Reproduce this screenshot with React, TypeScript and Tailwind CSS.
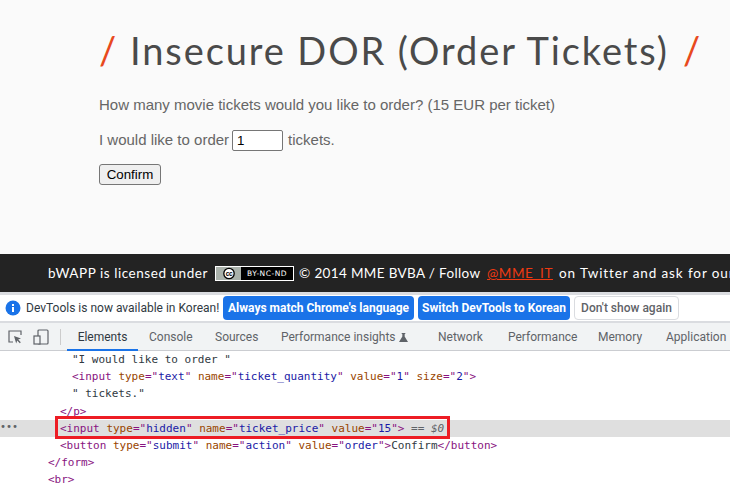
import React from 'react'

const ui = "font-['Roboto',sans-serif]"

const Attr = ({ name, value }: { name: string; value: string }) => (
  <>
    {' '}
    <span className="text-[#994500]">{name}</span>
    <span className="text-[#881280]">="</span>
    <span className="text-[#1a1aa6]">{value}</span>
    <span className="text-[#881280]">"</span>
  </>
)

const Tag = ({ children }: { children: React.ReactNode }) => <span className="text-[#881280]">{children}</span>

const Row = ({ pad, children }: { pad: string; children: React.ReactNode }) => (
  <div className={`h-[17.2px] leading-[17px] whitespace-pre ${pad}`}>{children}</div>
)

const App = () => {
  return (
    <div className="w-[730px] h-[494px] overflow-hidden bg-white">
      <main className="h-[254px] bg-[#fafafa] pl-[99px] pt-[24px] font-['Liberation_Sans',sans-serif] text-[#666666]">
        <h1 className="flex items-center h-[52px] text-[38px] font-['Lato',sans-serif] font-normal whitespace-nowrap">
          <span className="text-[#e8491d] w-[31px] shrink-0">/</span>
          <span className="text-[#4a4a4a] tracking-[1.9px] w-[553px] shrink-0">Insecure DOR (Order Tickets)</span>
          <span className="text-[#e8491d]">/</span>
        </h1>
        <p className="mt-[20px] text-[15px] leading-[18px]">How many movie tickets would you like to order? (15 EUR per ticket)</p>
        <p className="mt-[15px] flex items-center text-[15px] h-[22px]">
          I would like to order
          <input
            readOnly
            value="1"
            className="ml-[3px] mr-[5px] w-[51px] h-[21px] bg-white border border-[#767676] rounded-[2px] px-[4px] text-[13.3px] text-black outline-none"
          />
          tickets.
        </p>
        <button className="block mt-[13px] w-[62px] h-[21px] bg-[#efefef] border border-[#767676] rounded-[3px] text-[13.3px] leading-none text-black">
          Confirm
        </button>
      </main>

      <footer className="h-[38px] bg-[#232323] flex items-center pl-[48px] whitespace-nowrap overflow-hidden text-white text-[13.5px] font-['Lato',sans-serif] tracking-[0.55px]">
        <span className="w-[167px] shrink-0">bWAPP is licensed under</span>
        <span className="flex items-center shrink-0 w-[79px] h-[15px] bg-white p-px mr-[5px] tracking-normal">
          <span className="flex items-center justify-center w-[25px] h-full bg-[#aab2ab]">
            <svg viewBox="0 0 20 12" className="w-[20px] h-[13px]">
              <circle cx="10" cy="6" r="5.2" fill="#fff" stroke="#000" strokeWidth="1.3" />
              <text x="10" y="8.3" textAnchor="middle" fontSize="6.5" fontWeight="700" fontFamily="Liberation Sans" letterSpacing="-0.3">cc</text>
            </svg>
          </span>
          <span className="flex-1 h-full bg-black text-white text-center text-[7.5px] leading-[13px] tracking-[0.5px] font-['DejaVu_Sans',sans-serif]">BY-NC-ND</span>
        </span>
        <span className="w-[188px] shrink-0 tracking-[0.35px]">© 2014 MME BVBA / Follow</span>
        <span className="text-[#ee3a12] underline w-[72px] shrink-0">@MME_IT</span>
        <span className="tracking-[0.9px]">on Twitter and ask for our cheat sheets</span>
      </footer>

      <div className="h-[3px] bg-[#dadce0]" />

      <div className={`${ui} h-[26px] flex items-center pl-[5px] text-[12px] text-[#303942] whitespace-nowrap`}>
        <svg viewBox="0 0 16 16" className="w-[16px] h-[16px] mr-[5px] shrink-0">
          <circle cx="8" cy="8" r="7.5" fill="#1a73e8" />
          <rect x="7" y="7" width="2" height="5" fill="#fff" />
          <rect x="7" y="4" width="2" height="2" fill="#fff" />
        </svg>
        <span className="w-[197px] shrink-0">DevTools is now available in Korean!</span>
        <span className="flex items-center justify-center shrink-0 w-[191px] h-[24px] bg-[#1a73e8] text-white font-bold rounded-[4px] mr-[4px]">Always match Chrome's language</span>
        <span className="flex items-center justify-center shrink-0 w-[152px] h-[24px] bg-[#1a73e8] text-white font-bold rounded-[4px] mr-[4px]">Switch DevTools to Korean</span>
        <span className="flex items-center justify-center shrink-0 w-[105px] h-[24px] border border-[#dadce0] rounded-[4px] font-medium text-[#5f6368]">Don't show again</span>
      </div>

      <div className="h-[2px] bg-[#dadce0]" />

      <nav className={`${ui} h-[28px] bg-[#f1f3f4] border-b border-[#cbcdd1] flex items-center text-[12px] text-[#5f6368] whitespace-nowrap`}>
        <svg viewBox="0 0 16 16" className="w-[16px] h-[16px] ml-[7px] shrink-0" fill="none" stroke="#5f6368" strokeWidth="1.2">
          <path d="M14 6V2H2v11h4" />
          <path d="M7 7l7 2.6-2.8 1 2.6 2.6-1 1-2.6-2.6-1 2.8z" fill="#5f6368" stroke="none" />
        </svg>
        <svg viewBox="0 0 16 16" className="w-[16px] h-[16px] ml-[10px] shrink-0" fill="none" stroke="#5f6368" strokeWidth="1.2">
          <rect x="5" y="1" width="10" height="14" rx="1" />
          <rect x="1" y="7" width="6" height="8" fill="#f1f3f4" />
        </svg>
        <span className="w-px h-[16px] bg-[#ccc] ml-[11px] mr-[6px] shrink-0" />
        <span className="relative flex items-center justify-center shrink-0 w-[71px] h-full text-[#303942] pt-[1px]">
          Elements
          <span className="absolute left-0 right-0 bottom-[-1px] h-[2px] bg-[#1a73e8]" />
        </span>
        <span className="w-[66px] shrink-0 ml-[11px] pt-[1px]">Console</span>
        <span className="w-[66px] shrink-0 pt-[1px]">Sources</span>
        <span className="flex items-center gap-[3px] w-[157px] shrink-0 pt-[1px]">
          Performance insights
          <svg viewBox="0 0 10 10" className="w-[9px] h-[9px]">
            <path d="M3 0h4v1H6.3v3L10 10H0l3.7-6V1H3z" fill="#5f6368" />
          </svg>
        </span>
        <span className="w-[70px] shrink-0 pt-[1px]">Network</span>
        <span className="w-[90px] shrink-0 pt-[1px]">Performance</span>
        <span className="w-[68px] shrink-0 pt-[1px]">Memory</span>
        <span className="pt-[1px]">Application</span>
      </nav>

      <section className="font-['DejaVu_Sans_Mono',monospace] text-[11px]">
        <Row pad="pl-[72px]"><span className="text-[#303942]">"I would like to order "</span></Row>
        <Row pad="pl-[72px]">
          <Tag>&lt;input</Tag>
          <Attr name="type" value="text" />
          <Attr name="name" value="ticket_quantity" />
          <Attr name="value" value="1" />
          <Attr name="size" value="2" />
          <Tag>&gt;</Tag>
        </Row>
        <Row pad="pl-[72px]"><span className="text-[#303942]">" tickets."</span></Row>
        <Row pad="pl-[60px]"><Tag>&lt;/p&gt;</Tag></Row>
        <div className="relative h-[17.2px] bg-[#dfdfdf] leading-[17px] whitespace-pre pl-[60px]">
          <span className="absolute left-0 top-0 text-[#5f6368] text-[10px] leading-[14px]">•••</span>
          <Tag>&lt;input</Tag>
          <Attr name="type" value="hidden" />
          <Attr name="name" value="ticket_price" />
          <Attr name="value" value="15" />
          <Tag>&gt;</Tag>
          <span className="text-[#5f6368]"> == </span>
          <span className="text-[#5f6368] italic">$0</span>
          <span className="absolute left-[55px] top-[-4px] w-[395px] h-[23px] border-[3px] border-[#ed1c24]" />
        </div>
        <Row pad="pl-[60px]">
          <Tag>&lt;button</Tag>
          <Attr name="type" value="submit" />
          <Attr name="name" value="action" />
          <Attr name="value" value="order" />
          <Tag>&gt;</Tag>
          <span className="text-[#303942]">Confirm</span>
          <Tag>&lt;/button&gt;</Tag>
        </Row>
        <Row pad="pl-[48px]"><Tag>&lt;/form&gt;</Tag></Row>
        <Row pad="pl-[48px]"><Tag>&lt;br&gt;</Tag></Row>
      </section>
    </div>
  )
}

export default App
